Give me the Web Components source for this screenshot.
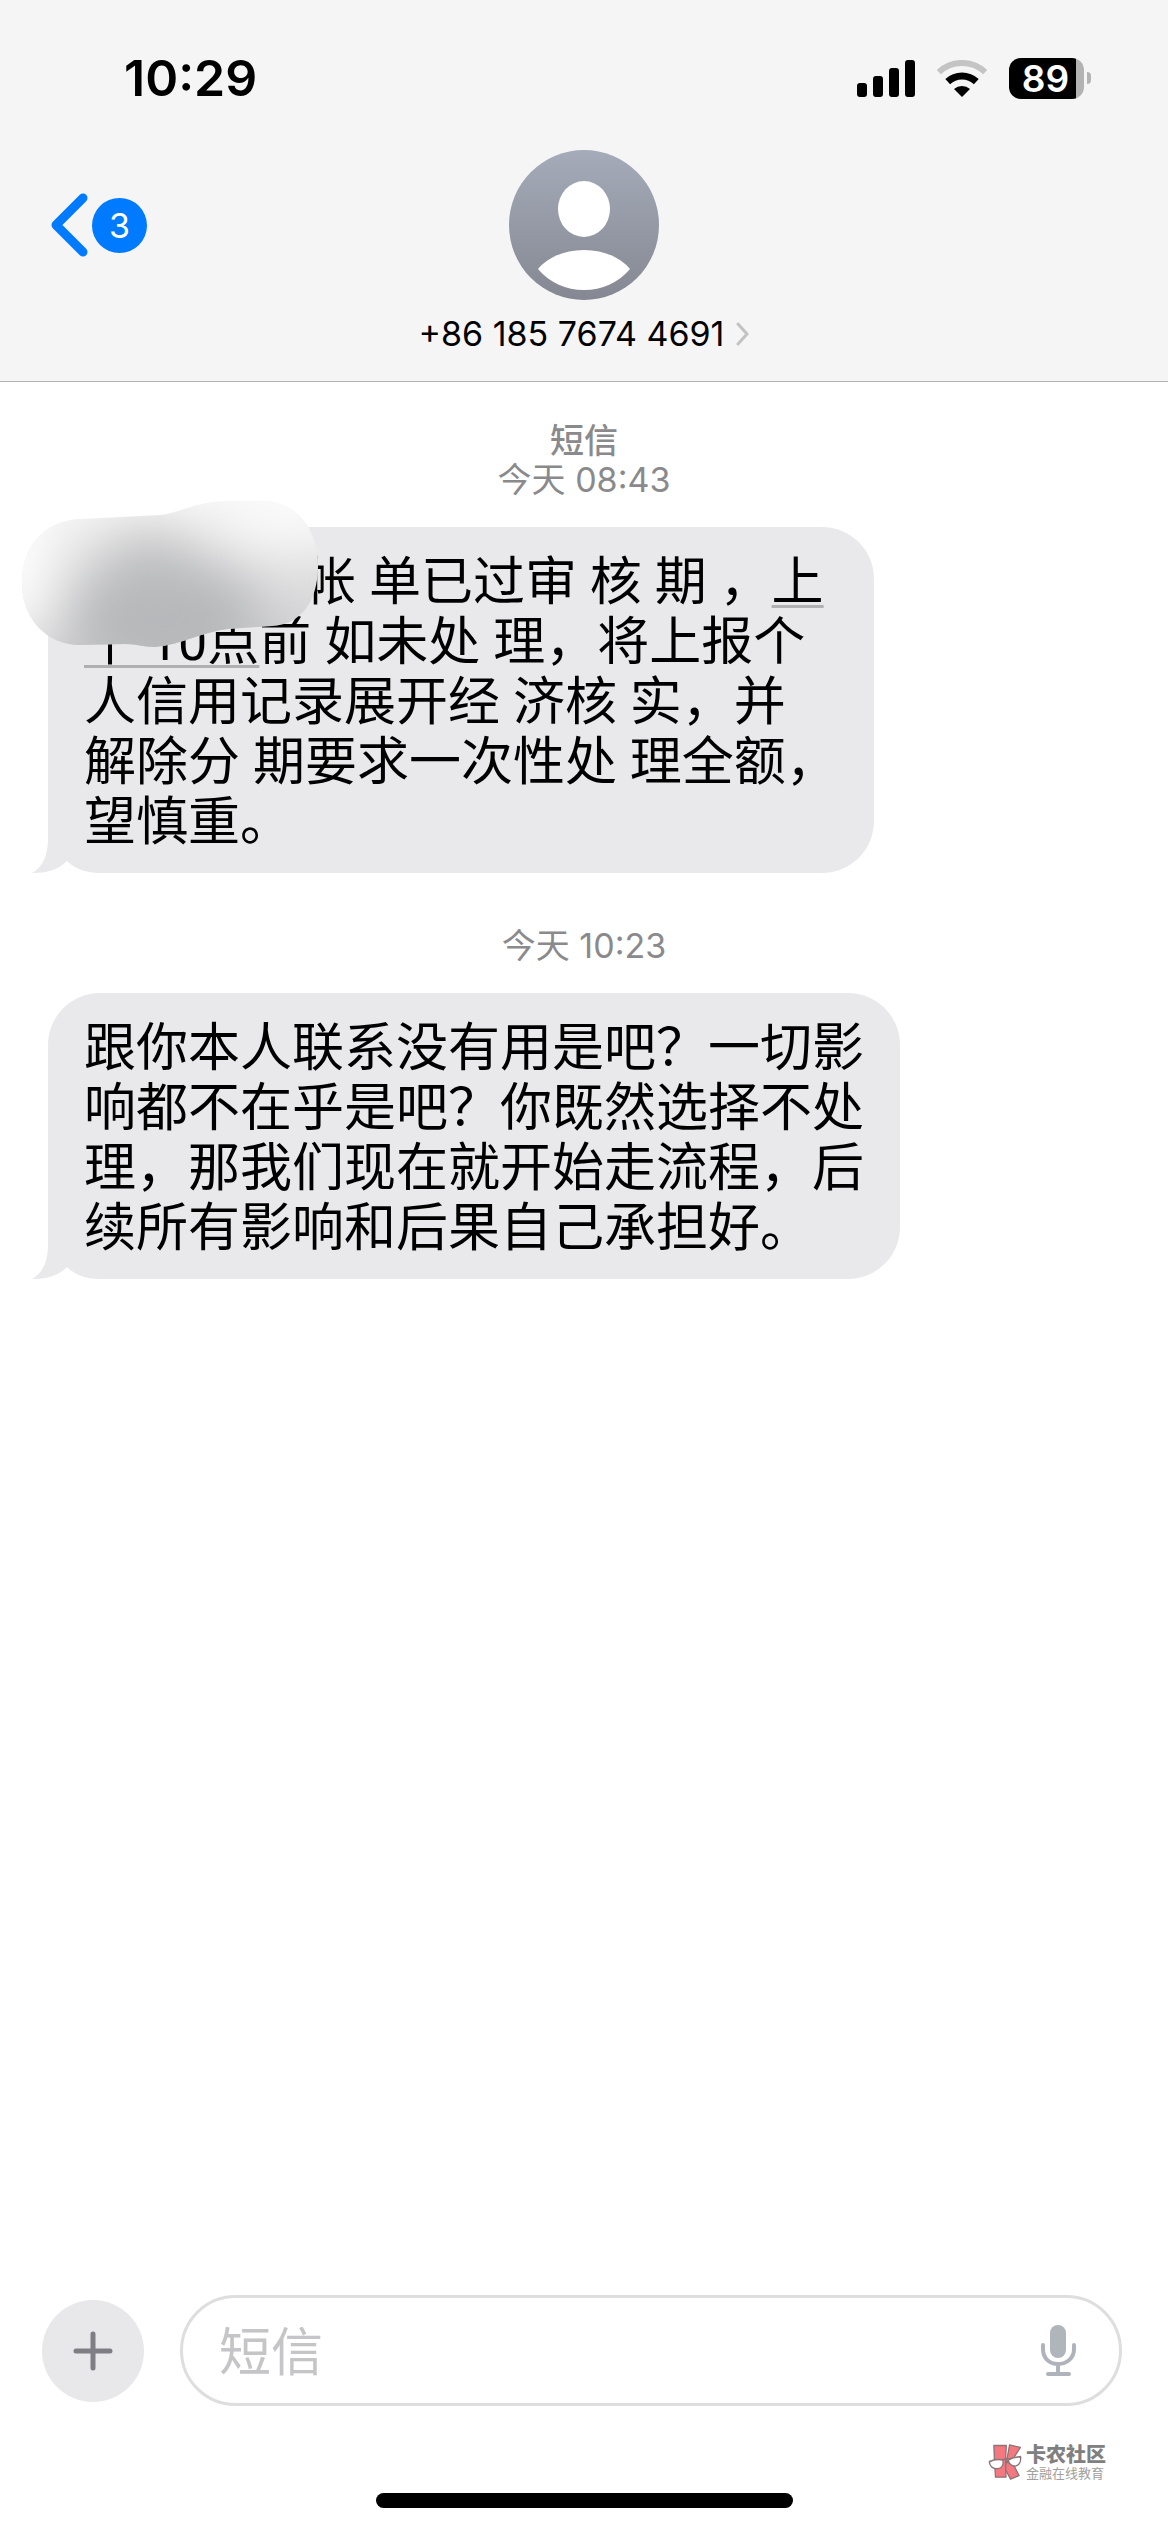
<!DOCTYPE html>
<html lang="zh-CN">
<head>
<meta charset="utf-8">
<meta name="viewport" content="width=device-width, initial-scale=1">
<title>短信</title>
<style>
  body {
    margin: 0;
    background: #fff;
    color: #000;
    font-family: Inter, "Noto Sans CJK SC", sans-serif;
  }
</style>
</head>
<body>
<messages-app>
  <status-bar slot="header" time="10:29" battery="89"></status-bar>
  <chat-header slot="header" unread="3">+86 185 7674 4691</chat-header>

  <time-stamp><b>短信</b><br>今天 08:43</time-stamp>
  <message-bubble redacted>帐 单已过审 核 期 ，<u>上</u><br><u>午 10点</u>前 如未处 理，将上报个<br>人信用记录展开经 济核 实，并<br>解除分 期要求一次性处 理全额，<br>望慎重。</message-bubble>
  <time-stamp>今天 10:23</time-stamp>
  <message-bubble>跟你本人联系没有用是吧？一切影<br>响都不在乎是吧？你既然选择不处<br>理，那我们现在就开始走流程，后<br>续所有影响和后果自己承担好。</message-bubble>

  <message-composer slot="footer" placeholder="短信"></message-composer>
  <water-mark slot="footer">卡农社区<span slot="sub">金融在线教育</span></water-mark>
  <home-indicator slot="footer"></home-indicator>
</messages-app>

<script>
class MessagesApp extends HTMLElement {
    constructor() {
        super();
        this.attachShadow({ mode: 'open' });
        this.shadowRoot.innerHTML = `
      <style>
        :host {
          display: flex;
          flex-direction: column;
          min-height: 100vh;
        }

        header {
          background: #f5f5f5;
          border-bottom: 1px solid #b2b2b2;
        }

        main {
          flex: 1;
          display: flex;
          flex-direction: column;
          align-items: flex-start;
          padding: 39px 48px;
        }

        footer {
          display: flex;
          flex-direction: column;
        }
      </style>
      <header><slot name="header"></slot></header>
      <main><slot></slot></main>
      <footer><slot name="footer"></slot></footer>
    `;
    }
}

class StatusBar extends HTMLElement {
    constructor() {
        super();
        this.attachShadow({ mode: 'open' });
    }

    connectedCallback() {
        this.shadowRoot.innerHTML = `
      <style>
        :host {
          display: flex;
          justify-content: space-between;
          align-items: center;
          padding: 46px 77px 0 124px;
          line-height: 64px;
        }

        .time {
          font-size: 50px;
          font-weight: 600;
        }

        .icons {
          display: flex;
          align-items: center;
          gap: 22px;
        }

        svg {
          display: block;
        }

        .battery {
          display: flex;
          align-items: center;
          gap: 3px;
        }

        .level {
          box-sizing: border-box;
          width: 75px;
          height: 41px;
          padding-right: 2px;
          border-radius: 12px;
          background: linear-gradient(to right, #000 ${this.getAttribute('battery')}%, #b3b3b3 0);
          color: #fff;
          font-size: 37px;
          font-weight: 600;
          line-height: 41px;
          text-align: center;
        }

        .nub {
          width: 4px;
          height: 12px;
          border-radius: 0 4px 4px 0;
          background: #b3b3b3;
        }
      </style>
      <div class="time">${this.getAttribute('time')}</div>
      <div class="icons">
        <svg width="58" height="37" viewBox="0 0 58 37">
          <rect x="0" y="23" width="10" height="14" rx="3"/>
          <rect x="16" y="16" width="10" height="21" rx="3"/>
          <rect x="32" y="8" width="10" height="29" rx="3"/>
          <rect x="48" y="0" width="10" height="37" rx="3"/>
        </svg>
        <svg width="50" height="37" viewBox="0 0 50 37" fill="none">
          <path d="M1.8 12.1A34 34 0 0 1 48.2 12.1" stroke="#c4c4c4" stroke-width="6"/>
          <path d="M10.7 21.6A21 21 0 0 1 39.3 21.6" stroke="#000" stroke-width="7"/>
          <path d="M17 29A12 12 0 0 1 33 29L25 37Z" fill="#000"/>
        </svg>
        <div class="battery">
          <div class="level">${this.getAttribute('battery')}</div>
          <div class="nub"></div>
        </div>
      </div>
    `;
    }
}

class ChatHeader extends HTMLElement {
    constructor() {
        super();
        this.attachShadow({ mode: 'open' });
    }

    connectedCallback() {
        this.shadowRoot.innerHTML = `
      <style>
        :host {
          display: grid;
          grid-template-columns: 1fr auto 1fr;
          align-items: start;
          padding: 40px 50px 27px;
        }

        button {
          padding: 0;
          border: 0;
          background: none;
          color: inherit;
          font: inherit;
        }

        .back {
          justify-self: start;
          display: flex;
          align-items: center;
          gap: 4px;
          height: 150px;
        }

        .badge {
          width: 55px;
          height: 55px;
          border-radius: 50%;
          background: #007aff;
          color: #fff;
          font-size: 34px;
          line-height: 55px;
          text-align: center;
        }

        .contact {
          display: flex;
          flex-direction: column;
          align-items: center;
          gap: 14px;
        }

        .name {
          display: flex;
          align-items: center;
          gap: 12px;
          font-size: 34px;
          line-height: 40px;
        }

        svg {
          display: block;
        }
      </style>
      <button class="back" aria-label="返回">
        <svg width="38" height="64" viewBox="0 0 38 64" fill="none" stroke="#007aff" stroke-width="9" stroke-linecap="round" stroke-linejoin="round">
          <path d="M33 5L6 32L33 59"/>
        </svg>
        <span class="badge">${this.getAttribute('unread')}</span>
      </button>
      <button class="contact">
        <svg width="150" height="150" viewBox="0 0 150 150">
          <defs>
            <linearGradient id="sky" x1="0" y1="0" x2="0" y2="1">
              <stop offset="0" stop-color="#a5abb9"/>
              <stop offset="1" stop-color="#858892"/>
            </linearGradient>
          </defs>
          <circle cx="75" cy="75" r="75" fill="url(#sky)"/>
          <ellipse cx="75" cy="59" rx="26" ry="28" fill="#fff"/>
          <path d="M29 119C39 107 56 100 75 100S111 107 121 119C109 133 93 140 75 140S41 133 29 119Z" fill="#fff"/>
        </svg>
        <span class="name">
          <slot></slot>
          <svg width="13" height="24" viewBox="0 0 13 24" fill="none" stroke="#c2c2c4" stroke-width="3" stroke-linecap="round" stroke-linejoin="round">
            <path d="M2 2L11 12L2 22"/>
          </svg>
        </span>
      </button>
    `;
    }
}

class TimeStamp extends HTMLElement {
    constructor() {
        super();
        this.attachShadow({ mode: 'open' });
        this.shadowRoot.innerHTML = `
      <style>
        :host {
          display: block;
          align-self: stretch;
          margin: 53px 0 28px;
          color: #8a8a8c;
          font-size: 34px;
          line-height: 39px;
          text-align: center;
        }

        :host(:first-of-type) {
          margin-top: 0;
        }

        ::slotted(b) {
          font-weight: 500;
        }
      </style>
      <slot></slot>
    `;
    }
}

class MessageBubble extends HTMLElement {
    constructor() {
        super();
        this.attachShadow({ mode: 'open' });
    }

    connectedCallback() {
        // the smudge hides the sender name at the start of the first line
        const redacted = this.hasAttribute('redacted');
        this.shadowRoot.innerHTML = `
      <style>
        :host {
          display: block;
          position: relative;
          padding: 26px 36px 20px 36px;
          border-radius: 52px 52px 52px 0;
          font-family: Roboto, "Noto Sans CJK SC", sans-serif;
          font-size: 52px;
          line-height: 60px;
          white-space: nowrap;
          background: linear-gradient(#e9e9eb, #e9e9eb) top / 100% calc(100% - 52px) no-repeat,
                      linear-gradient(#e9e9eb, #e9e9eb) 52px 100% / calc(100% - 52px) 52px no-repeat;
        }

        ::slotted(u) {
          text-decoration-color: #b0b0b2;
          text-decoration-thickness: 3px;
          text-underline-offset: 5px;
          text-decoration-skip-ink: none;
        }

        .tail {
          position: absolute;
          z-index: -1;
          left: -16px;
          bottom: 0;
        }

        .gap {
          display: inline-block;
          width: 220px;
        }

        .smudge {
          position: absolute;
          left: -28px;
          top: -28px;
        }
      </style>
      <svg class="tail" width="68" height="52" viewBox="0 0 68 52" fill="#e9e9eb">
        <path d="M16 0H68V52C54 52 43 48 35 40C26 49 15 52 0 52C11 46 16 34 16 18Z"/>
      </svg>
      ${redacted ? '<span class="gap"></span>' : ''}<slot></slot>
      ${redacted ? this.smudge() : ''}
    `;
    }

    smudge() {
        return `
      <svg class="smudge" width="300" height="150" viewBox="20 499 300 150">
        <defs>
          <linearGradient id="base" x1="0" y1="0" x2="0" y2="1">
            <stop offset="0" stop-color="#f6f6f6"/>
            <stop offset="0.5" stop-color="#e0e0e1"/>
            <stop offset="1" stop-color="#cdcdcf"/>
          </linearGradient>
          <clipPath id="shape">
            <path d="M22 583C22 545 46 519 82 519L160 515C180 513 195 501 230 501H262C296 501 318 528 318 566C318 602 300 625 272 626L228 629C205 631 180 645 155 647C142 647 138 644 125 644L80 645C46 645 22 618 22 583Z"/>
          </clipPath>
          <filter id="soft" x="-100%" y="-100%" width="300%" height="300%">
            <feGaussianBlur stdDeviation="27"/>
          </filter>
        </defs>
        <g clip-path="url(#shape)">
          <rect x="20" y="499" width="300" height="150" fill="url(#base)"/>
          <g filter="url(#soft)">
            <ellipse cx="165" cy="620" rx="95" ry="60" fill="#b6b7b9"/>
            <ellipse cx="150" cy="570" rx="45" ry="34" fill="#bbbcbd"/>
            <ellipse cx="15" cy="560" rx="36" ry="90" fill="#fff"/>
            <ellipse cx="285" cy="500" rx="60" ry="40" fill="#fafafa"/>
          </g>
        </g>
      </svg>`;
    }
}

class MessageComposer extends HTMLElement {
    constructor() {
        super();
        this.attachShadow({ mode: 'open' });
    }

    connectedCallback() {
        this.shadowRoot.innerHTML = `
      <style>
        :host {
          display: flex;
          align-items: center;
          gap: 36px;
          padding: 0 46px 0 42px;
        }

        button {
          display: grid;
          place-items: center;
          padding: 0;
          border: 0;
          background: none;
        }

        .add {
          width: 102px;
          height: 102px;
          border-radius: 50%;
          background: #e8e8ea;
        }

        .field {
          flex: 1;
          display: flex;
          align-items: center;
          box-sizing: border-box;
          height: 111px;
          padding: 0 43px 0 36px;
          border: 3px solid #dedede;
          border-radius: 56px;
        }

        input {
          flex: 1;
          min-width: 0;
          padding: 4px 0 0;
          border: 0;
          outline: 0;
          background: none;
          font: inherit;
          font-size: 52px;
          line-height: 60px;
        }

        input::placeholder {
          color: #c5c5c7;
        }
      </style>
      <button class="add" aria-label="添加">
        <svg width="40" height="40" viewBox="0 0 40 40" stroke="#7e7e84" stroke-width="5" stroke-linecap="round">
          <path d="M20 3V37M3 20H37"/>
        </svg>
      </button>
      <div class="field">
        <input type="text" aria-label="${this.getAttribute('placeholder')}" placeholder="${this.getAttribute('placeholder')}">
        <button aria-label="听写">
          <svg width="35" height="51" viewBox="0 0 35 51" fill="none" stroke="#b0b3bc" stroke-width="4" stroke-linecap="round">
            <rect x="9" y="0" width="16" height="33" rx="8" fill="#b0b5bb" stroke="none"/>
            <path d="M2 20V24C2 33 8 39 17 39S33 33 33 24V20M17 39V48M7 49H28"/>
          </svg>
        </button>
      </div>
    `;
    }
}

class WaterMark extends HTMLElement {
    constructor() {
        super();
        this.attachShadow({ mode: 'open' });
        this.shadowRoot.innerHTML = `
      <style>
        :host {
          display: flex;
          align-items: center;
          align-self: flex-end;
          gap: 3px;
          padding: 37px 62px 0 0;
          color: #808080;
        }

        .title {
          font-size: 20px;
          font-weight: 900;
          line-height: 22px;
        }

        .sub {
          color: #a0a0a0;
          font-size: 13px;
          line-height: 14px;
        }
      </style>
      <svg width="36" height="38" viewBox="50 40 110 115" stroke="#8a7476" stroke-width="4" stroke-linejoin="round">
        <path d="M71 47H109L107 86L108 144H76L73 100Z" fill="#f5777f"/>
        <path d="M119 45L152 53L132 84L109 100Z" fill="#f5777f"/>
        <path d="M108 98L130 104L148 139L122 150L107 122Z" fill="#f5777f"/>
        <path d="M56 96L100 90Q110 86 118 88L154 80" fill="none"/>
        <path d="M57 97Q78 86 99 92Q102 116 82 118Q60 118 57 97Z" fill="#fff"/>
        <path d="M115 92Q134 80 153 83Q154 106 137 110Q118 110 115 92Z" fill="#fff"/>
      </svg>
      <div>
        <div class="title"><slot></slot></div>
        <div class="sub"><slot name="sub"></slot></div>
      </div>
    `;
    }
}

class HomeIndicator extends HTMLElement {
    constructor() {
        super();
        this.attachShadow({ mode: 'open' });
        this.shadowRoot.innerHTML = `
      <style>
        :host {
          display: block;
          padding: 12px 0 24px;
        }

        .bar {
          width: 417px;
          height: 15px;
          margin: 0 auto;
          border-radius: 8px;
          background: #000;
        }
      </style>
      <div class="bar"></div>
    `;
    }
}

customElements.define('messages-app', MessagesApp);
customElements.define('status-bar', StatusBar);
customElements.define('chat-header', ChatHeader);
customElements.define('time-stamp', TimeStamp);
customElements.define('message-bubble', MessageBubble);
customElements.define('message-composer', MessageComposer);
customElements.define('water-mark', WaterMark);
customElements.define('home-indicator', HomeIndicator);
</script>
</body>
</html>
